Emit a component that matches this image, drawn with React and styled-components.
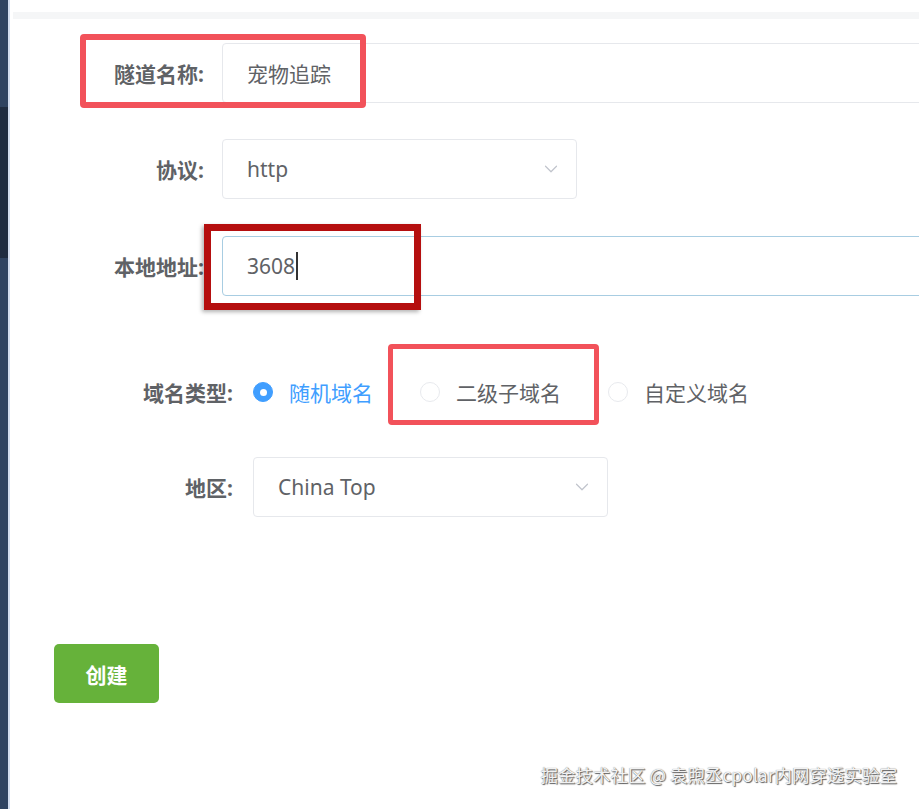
import styled, { createGlobalStyle } from 'styled-components';
import { ChevronDown } from 'lucide-react';

const GlobalStyle = createGlobalStyle`
  html, body {
    margin: 0;
    padding: 0;
    background: #ffffff;
  }
  body {
    font-family: "Noto Sans", "Noto Sans CJK SC", sans-serif;
  }
`;

const Page = styled.div`
  position: relative;
  display: flex;
  width: 919px;
  height: 809px;
  overflow: hidden;
  background: #ffffff;
`;

const Sidebar = styled.div`
  width: 8px;
  flex-shrink: 0;
  display: flex;
  flex-direction: column;
  border-right: 2px solid #d3ddef;
`;

const SideBlock = styled.div`
  height: ${props => props.$h || 'auto'};
  flex: ${props => (props.$grow ? 1 : 'none')};
  background: ${props => props.$bg};
`;

const Main = styled.main`
  flex: 1;
  display: flex;
  flex-direction: column;
  padding-top: 12px;
`;

const TopBand = styled.div`
  height: 7px;
  margin-left: 3px;
  background: #f5f6f7;
`;

const Form = styled.form`
  display: flex;
  flex-direction: column;
  padding-top: 24px;
`;

const Row = styled.div`
  position: relative;
  display: flex;
  align-items: center;
  height: 60px;
  margin-top: ${props => props.$mt || 0}px;
`;

const Label = styled.label`
  width: ${props => props.$w}px;
  flex-shrink: 0;
  margin-right: ${props => props.$gap}px;
  text-align: right;
  font-size: 21px;
  font-weight: 700;
  color: #5f6266;
  white-space: nowrap;
`;

const TextBox = styled.div`
  box-sizing: border-box;
  height: 60px;
  width: ${props => props.$w}px;
  flex-shrink: 0;
  display: flex;
  align-items: center;
  padding: 0 24px;
  border: 1px solid ${props => (props.$focus ? '#a8cde2' : '#e6e8ec')};
  border-radius: 4px;
  font-size: 21px;
  color: #606266;
  background: #fff;
`;

const SelectBox = styled(TextBox)`
  justify-content: space-between;
  padding-right: 14px;
`;

const Caret = styled.span`
  display: inline-block;
  width: 1.5px;
  height: 28px;
  margin-left: 1px;
  background: #333;
`;

const RadioGroup = styled.div`
  display: flex;
  align-items: center;
  gap: 47px;
`;

const RadioItem = styled.div`
  display: flex;
  align-items: center;
  gap: 16px;
  font-size: 21px;
  color: ${props => (props.$checked ? '#409eff' : '#606266')};
`;

const RadioDot = styled.span`
  box-sizing: border-box;
  width: 20px;
  height: 20px;
  border-radius: 50%;
  display: flex;
  align-items: center;
  justify-content: center;
  background: ${props => (props.$checked ? '#409eff' : '#fff')};
  border: 1px solid ${props => (props.$checked ? '#409eff' : '#e8eaee')};

  &::after {
    content: '';
    width: 7px;
    height: 7px;
    border-radius: 50%;
    background: #fff;
    display: ${props => (props.$checked ? 'block' : 'none')};
  }
`;

const ButtonRow = styled.div`
  margin-top: 127px;
  padding-left: 44px;
`;

const CreateButton = styled.button`
  width: 105px;
  height: 59px;
  border: none;
  border-radius: 5px;
  background: #66b23a;
  color: #fff;
  font-family: "Noto Sans CJK SC", sans-serif;
  font-size: 21px;
  font-weight: 700;
`;

const Highlight = styled.div`
  position: absolute;
  box-sizing: border-box;
  left: ${props => props.$x}px;
  top: ${props => props.$y}px;
  width: ${props => props.$w}px;
  height: ${props => props.$h}px;
  border: ${props => props.$bw || 6}px solid ${props => props.$color || '#f2525a'};
  border-radius: ${props => (props.$dark ? 0 : 4)}px;
  box-shadow: ${props => (props.$dark ? '-2px 2px 4px rgba(0,0,0,0.3)' : 'none')};
  pointer-events: none;
`;

const Watermark = styled.div`
  position: absolute;
  right: 22px;
  bottom: 22px;
  font-family: "Noto Sans CJK SC", sans-serif;
  font-size: 17.5px;
  color: #f2f2f2;
  text-shadow: 1px 1px 1px #5a5a5a, 0 0 1px #777;
  white-space: nowrap;
`;

const App = () => {
  const types = [
    { text: '随机域名', checked: true },
    { text: '二级子域名' },
    { text: '自定义域名' },
  ];

  return (
    <>
      <GlobalStyle />
      <Page>
        <Sidebar>
          <SideBlock $h="107px" $bg="#2f4361" />
          <SideBlock $h="151px" $bg="#1f2c41" />
          <SideBlock $grow $bg="#2f4361" />
        </Sidebar>

        <Main>
          <TopBand />
          <Form>
            <Row>
              <Label $w={194} $gap={18}>隧道名称:</Label>
              <TextBox $w={760}>宠物追踪</TextBox>
              <Highlight $x={70} $y={-9} $w={286} $h={74} />
            </Row>

            <Row $mt={36}>
              <Label $w={194} $gap={18}>协议:</Label>
              <SelectBox $w={355}>
                http
                <ChevronDown size={22} strokeWidth={1.3} color="#c0c4cc" />
              </SelectBox>
            </Row>

            <Row $mt={37}>
              <Label $w={194} $gap={18}>本地地址:</Label>
              <TextBox $w={760} $focus>
                3608<Caret />
              </TextBox>
              <Highlight $x={194} $y={-12} $w={217} $h={86} $bw={7} $color="#b50f0f" $dark />
            </Row>

            <Row $mt={66}>
              <Label $w={223} $gap={20}>域名类型:</Label>
              <RadioGroup>
                {types.map(t => (
                  <RadioItem key={t.text} $checked={t.checked}>
                    <RadioDot $checked={t.checked} />
                    {t.text}
                  </RadioItem>
                ))}
              </RadioGroup>
              <Highlight $x={378} $y={-18} $w={211} $h={81} $bw={5} />
            </Row>

            <Row $mt={35}>
              <Label $w={223} $gap={20}>地区:</Label>
              <SelectBox $w={355}>
                China Top
                <ChevronDown size={22} strokeWidth={1.3} color="#c0c4cc" />
              </SelectBox>
            </Row>

            <ButtonRow>
              <CreateButton type="button">创建</CreateButton>
            </ButtonRow>
          </Form>
        </Main>

        <Watermark>掘金技术社区 @ 袁煦丞cpolar内网穿透实验室</Watermark>
      </Page>
    </>
  );
};

export default App;
